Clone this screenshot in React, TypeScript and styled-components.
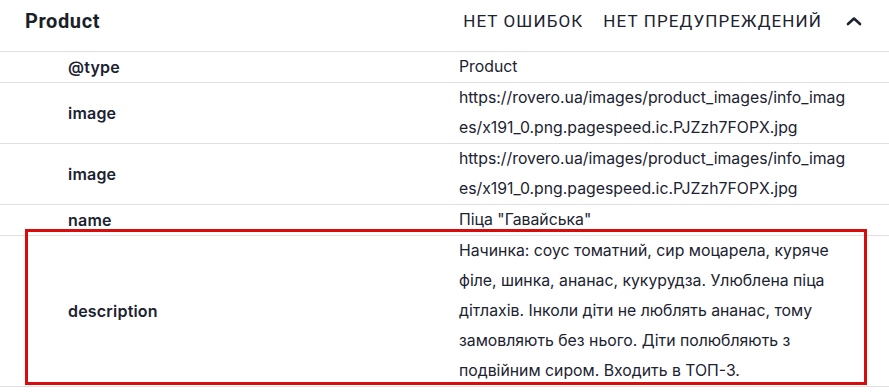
import styled, { createGlobalStyle } from 'styled-components'

const GlobalStyle = createGlobalStyle`
    html, body {
        margin: 0;
        padding: 0;
        background: #ffffff;
    }
    body {
        font-family: Inter, "Noto Sans", sans-serif;
        color: #1b2230;
    }
`

type Field = {
    name: string,
    lines: string[],
    highlight?: boolean
}

const fields: Field[] = [
    { name: '@type', lines: ['Product'] },
    {
        name: 'image',
        lines: ['https://rovero.ua/images/product_images/info_imag', 'es/x191_0.png.pagespeed.ic.PJZzh7FOPX.jpg']
    },
    {
        name: 'image',
        lines: ['https://rovero.ua/images/product_images/info_imag', 'es/x191_0.png.pagespeed.ic.PJZzh7FOPX.jpg']
    },
    { name: 'name', lines: ['Піца "Гавайська"'] },
    {
        name: 'description',
        lines: [
            'Начинка: соус томатний, сир моцарела, куряче',
            'філе, шинка, ананас, кукурудза. Улюблена піца',
            'дітлахів. Інколи діти не люблять ананас, тому',
            'замовляють без нього. Діти полюбляють з',
            'подвійним сиром. Входить в ТОП-3.'
        ],
        highlight: true
    }
]

const Panel = styled.section`
    width: 889px;
`

const Header = styled.header`
    display: flex;
    align-items: center;
    height: 42px;
    padding: 0 25px 9px;
    border-bottom: 1px solid #e0e0e0;
`

const Title = styled.h2`
    margin: 0;
    flex: 1;
    font-family: Roboto, sans-serif;
    font-size: 20px;
    font-weight: 700;
    letter-spacing: 0.6px;
    color: #1b1f27;
`

const Status = styled.span`
    font-family: Roboto, sans-serif;
    font-size: 17px;
    font-weight: 400;
    letter-spacing: 1.1px;
    text-transform: uppercase;
    color: #1b2230;
    margin-left: 20px;
`

const Toggle = styled.button`
    display: flex;
    align-items: center;
    justify-content: center;
    width: 20px;
    height: 20px;
    margin-left: 22px;
    padding: 0;
    border: none;
    background: none;
    color: #1b2230;
`

const Row = styled.div`
    position: relative;
    display: grid;
    grid-template-columns: 440px 1fr;
    align-items: center;
    border-bottom: 1px solid #e0e0e0;
`

const Key = styled.div`
    padding-left: 68px;
    font-size: 16px;
    font-weight: 600;
    letter-spacing: 0.2px;
    line-height: 30px;
`

const Value = styled.div`
    padding: 0 24px 0 19px;
    font-size: 15.8px;
    font-weight: 400;
    line-height: 30px;
`

const Line = styled.div`
    white-space: nowrap;
`

const Highlight = styled.div`
    position: absolute;
    top: -7px;
    left: 25px;
    right: 22px;
    bottom: 1px;
    border: 3px solid #d90c0c;
    pointer-events: none;
`

function Chevron() {
    return (
        <svg width="16" height="10" viewBox="0 0 16 10" fill="none">
            <polyline points="2,8 8,2.5 14,8" stroke="currentColor" strokeWidth="2.6" strokeLinecap="round" strokeLinejoin="round" />
        </svg>
    )
}

export default function App() {
    return (
        <>
            <GlobalStyle />
            <Panel>
                <Header>
                    <Title>Product</Title>
                    <Status>Нет ошибок</Status>
                    <Status>Нет предупреждений</Status>
                    <Toggle aria-label="Свернуть"><Chevron /></Toggle>
                </Header>
                {fields.map((field, i) => (
                    <Row key={i}>
                        <Key>{field.name}</Key>
                        <Value>
                            {field.lines.map((line, j) => <Line key={j}>{line}</Line>)}
                        </Value>
                        {field.highlight && <Highlight />}
                    </Row>
                ))}
            </Panel>
        </>
    )
}
